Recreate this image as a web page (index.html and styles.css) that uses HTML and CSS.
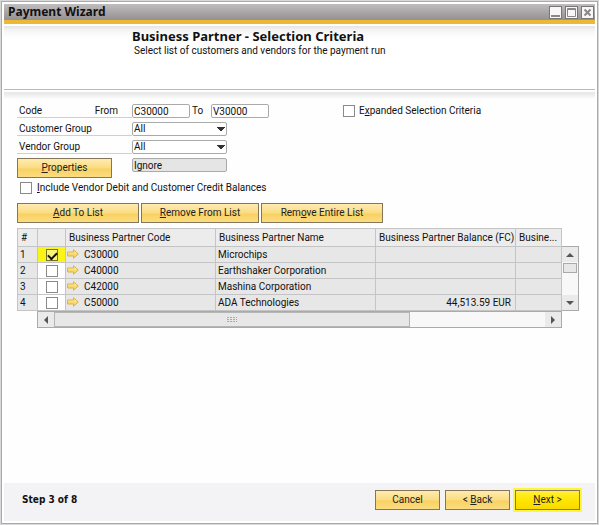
FILE: index.html
```html
<!DOCTYPE html>
<html lang="en">
<head>
<meta charset="utf-8">
<title>Payment Wizard</title>
<link rel="stylesheet" href="styles.css">
</head>
<body>
<svg class="defs" aria-hidden="true">
  <defs>
    <linearGradient id="gold" x1="0" y1="0" x2="0" y2="1">
      <stop offset="0" stop-color="#fff3a0"/><stop offset="1" stop-color="#f3c545"/>
    </linearGradient>
    <symbol id="arrow" viewBox="0 0 12 10"><path d="M.5 3h6V.7L11.3 5 6.5 9.3V7h-6z" fill="url(#gold)" stroke="#dcb350"/></symbol>
  </defs>
</svg>
<main class="window">
  <header class="titlebar">
    <h1>Payment Wizard</h1>
    <div class="window-buttons">
      <button aria-label="Minimize"><svg viewBox="0 0 11 11"><path d="M1 9h9" stroke-width="2"/></svg></button>
      <button aria-label="Maximize"><svg viewBox="0 0 11 11"><path d="M1.5 1.5h8v8h-8zM1 2.5h9"/></svg></button>
      <button aria-label="Close"><svg viewBox="0 0 11 11"><path d="M2.5 2.5l6 6M8.5 2.5l-6 6" stroke-width="2"/></svg></button>
    </div>
  </header>
  <section class="intro">
    <h2>Business Partner - Selection Criteria</h2>
    <p>Select list of customers and vendors for the payment run</p>
  </section>
  <form class="content">
    <div class="criteria">
      <div class="fields">
        <div class="field">
          <div class="caption split"><span>Code</span><label for="from">From</label></div>
          <input class="box code" id="from" value="C30000">
          <label class="to" for="to">To</label>
          <input class="box code" id="to" value="V30000">
        </div>
        <div class="field">
          <label class="caption" for="cgroup">Customer Group</label>
          <select class="box wide" id="cgroup"><option>All</option></select>
        </div>
        <div class="field">
          <label class="caption" for="vgroup">Vendor Group</label>
          <select class="box wide" id="vgroup"><option>All</option></select>
        </div>
        <div class="field last">
          <div class="caption plain"><button type="button" class="btn properties"><u>P</u>roperties</button></div>
          <input class="box wide muted" aria-label="Properties" value="Ignore" readonly>
        </div>
      </div>
      <label class="check"><input type="checkbox"><span>E<u>x</u>panded Selection Criteria</span></label>
    </div>
    <label class="check include"><input type="checkbox"><span><u>I</u>nclude Vendor Debit and Customer Credit Balances</span></label>
    <div class="actions">
      <button type="button" class="btn"><u>A</u>dd To List</button>
      <button type="button" class="btn"><u>R</u>emove From List</button>
      <button type="button" class="btn">Rem<u>o</u>ve Entire List</button>
    </div>
    <div class="list">
      <table>
        <colgroup><col class="c-num"><col class="c-check"><col class="c-code"><col class="c-name"><col class="c-balance"><col></colgroup>
        <thead>
          <tr><th>#</th><th></th><th>Business Partner Code</th><th>Business Partner Name</th><th>Business Partner Balance (FC)</th><th>Busine...</th></tr>
        </thead>
        <tbody>
          <tr><td>1</td><td class="pick marked"><input type="checkbox" aria-label="C30000" checked></td><td class="partner"><svg><use href="#arrow"/></svg>C30000</td><td>Microchips</td><td></td><td></td></tr>
          <tr><td>2</td><td class="pick"><input type="checkbox" aria-label="C40000"></td><td class="partner"><svg><use href="#arrow"/></svg>C40000</td><td>Earthshaker Corporation</td><td></td><td></td></tr>
          <tr><td>3</td><td class="pick"><input type="checkbox" aria-label="C42000"></td><td class="partner"><svg><use href="#arrow"/></svg>C42000</td><td>Mashina Corporation</td><td></td><td></td></tr>
          <tr><td>4</td><td class="pick"><input type="checkbox" aria-label="C50000"></td><td class="partner"><svg><use href="#arrow"/></svg>C50000</td><td>ADA Technologies</td><td class="amount">44,513.59 EUR</td><td></td></tr>
        </tbody>
      </table>
      <div class="vscroll">
        <button type="button" aria-label="Scroll up"><svg viewBox="0 0 14 14"><path d="M3 9h8L7 5z"/></svg></button>
        <span class="thumb"></span>
        <button type="button" aria-label="Scroll down"><svg viewBox="0 0 14 14"><path d="M3 5h8L7 9z"/></svg></button>
      </div>
      <div class="hscroll">
        <button type="button" aria-label="Scroll left"><svg viewBox="0 0 14 14"><path d="M9 3v8L5 7z"/></svg></button>
        <span class="thumb"><svg class="grip" viewBox="0 0 10 6"><path d="M0 .5h10M0 2.5h10M0 4.5h10"/></svg></span>
        <button type="button" aria-label="Scroll right"><svg viewBox="0 0 14 14"><path d="M5 3v8l4-4z"/></svg></button>
      </div>
    </div>
  </form>
  <footer class="footer">
    <strong>Step 3 of 8</strong>
    <div class="nav">
      <button class="btn">Cancel</button>
      <button class="btn">&lt; <u>B</u>ack</button>
      <button class="btn next"><u>N</u>ext &gt;</button>
    </div>
  </footer>
</main>
</body>
</html>
```
FILE: styles.css
```css
* { box-sizing: border-box; }
body {
  margin: 0;
  padding: 1px;
  background: #d8d8d8;
  color: #111;
  font: 10px/14px Roboto, "Noto Sans", sans-serif;
}
button, input, select { font: inherit; color: inherit; margin: 0; }
h1, h2, p { margin: 0; }
u { text-underline-offset: 1px; }
.defs { position: absolute; width: 0; height: 0; }

.window {
  display: flex;
  flex-direction: column;
  min-height: calc(100vh - 2px);
  padding: 2px;
  border: 1px solid #aaa;
  background: #fff;
}
.titlebar {
  display: flex;
  align-items: center;
  justify-content: space-between;
  height: 20px;
  padding: 0 1px 0 4px;
  border-bottom: 4px solid #edb935;
  background: linear-gradient(#bfbdbe, #959091);
}
.titlebar h1 { font: bold 12px/16px "Noto Sans", sans-serif; }
.window-buttons { display: flex; gap: 3px; }
.window-buttons button {
  display: flex;
  width: 13px;
  height: 13px;
  padding: 0;
  border: 1px solid #777;
  background: #f7f7f7;
}
.window-buttons svg { width: 11px; height: 11px; fill: none; stroke: #888; }

.intro {
  height: 64px;
  margin-top: 2px;
  padding: 3px 0 0 128px;
  border-bottom: 1px solid #bbb;
  background: linear-gradient(#e4e4e4, #f4f4f4 4px, #fff 12px);
}
.intro h2 { font: bold 13px/15px "Noto Sans", sans-serif; }
.intro p { padding-left: 2px; }

.content {
  flex: 1;
  margin-top: 2px;
  padding: 12px 16px 0 13px;
  background: linear-gradient(#e6e6e6, #eee 3px, #fefefe 7px);
}
.criteria { display: flex; }
.fields { flex: 0 0 326px; }
.field { display: flex; height: 18px; }
.caption { width: 115px; height: 14px; padding: 0 2px; border-bottom: 1px solid #ccd0d4; }
.split { display: flex; justify-content: space-between; padding-right: 14px; }
.plain { padding: 0; border: 0; }
.box {
  height: 14px;
  padding: 0 1px;
  border: 1px solid #aaa;
  border-radius: 2px;
  background: #fff;
  line-height: 12px;
}
.code { width: 58px; }
.to { width: 21px; padding-left: 2px; }
.wide { width: 95px; }
select.box {
  appearance: none;
  background-image:
    linear-gradient(to bottom right, #333 50%, transparent 51%),
    linear-gradient(to bottom left, #333 50%, transparent 51%);
  background-size: 4px 5px;
  background-position: right 1px top 4px, right 5px top 4px;
  background-repeat: no-repeat;
}
.muted { background: #e5e5e5; }
.last { height: 21px; }
.btn {
  height: 20px;
  padding: 0;
  border: 1px solid #85765a;
  background: linear-gradient(#ffebb0, #fadc82 50%, #f8d160 55%, #fbdc82);
  color: #222;
  line-height: 16px;
}
.properties { width: 95px; }

.check { display: flex; align-items: center; gap: 4px; height: 14px; }
input[type="checkbox"] {
  flex: none;
  appearance: none;
  width: 12px;
  height: 12px;
  border: 1px solid #8a8a8a;
  background: #fff;
}
.include { margin-top: 2px; padding-left: 3px; gap: 5px; }
.actions { display: flex; gap: 2px; margin-top: 8px; }
.actions .btn { width: 122px; }
.actions .btn:nth-child(2) { width: 118px; }

.list {
  display: grid;
  grid-template-columns: 1fr 17px;
  margin-top: 5px;
}
table {
  width: 100%;
  table-layout: fixed;
  border-collapse: collapse;
  background: #e7e7e7;
}
.c-num { width: 20px; }
.c-check { width: 28px; }
.c-code { width: 150px; }
.c-name { width: 160px; }
.c-balance { width: 140px; }
th, td {
  height: 16px;
  padding: 0 2px;
  overflow: hidden;
  border: 1px solid #c4c4c4;
  font-weight: 400;
  line-height: 14px;
  text-align: left;
  white-space: nowrap;
}
th { height: 18px; padding-left: 3px; background: #ececec; }
.pick { padding: 0; background: #fff; }
.pick input { display: block; margin: 0 auto; }
.marked { background: #fbf418; }
.marked input { border-color: #77742a; background: #f8f476; }
.marked input::before {
  content: "";
  display: block;
  width: 7px;
  height: 4px;
  margin: 2px 0 0 1px;
  border: solid #111;
  border-width: 0 0 2px 2px;
  transform: rotate(-45deg);
}
.partner svg { width: 12px; height: 10px; margin-right: 5px; vertical-align: -1px; }
.partner { padding-left: 1px; }
.amount { padding-right: 4px; text-align: right; }

.vscroll, .hscroll { display: flex; border: 1px solid #aaa; background: #f8f8f8; }
.vscroll { flex-direction: column; margin-top: 18px; border-left: 0; }
.vscroll button, .hscroll button {
  display: flex;
  align-items: center;
  justify-content: center;
  flex: none;
  width: 16px;
  height: 15px;
  padding: 0;
  border: 0;
  background: #eaeaea;
}
.vscroll svg, .hscroll button svg { width: 14px; height: 14px; fill: #555; }
.vscroll .thumb { height: 10px; margin: 1px; border: 1px solid #aaa; background: #e7e7e7; }
.vscroll button:last-child, .hscroll button:last-child { margin-top: auto; margin-left: auto; }
.hscroll { height: 17px; margin-left: 20px; }
.hscroll .thumb {
  display: flex;
  align-items: center;
  justify-content: center;
  width: 68%;
  border: 1px solid #b5b5b5;
  background: #e7e7e7;
}
.grip { width: 10px; height: 6px; stroke: #aaa; stroke-dasharray: 2 1; }

.footer {
  display: flex;
  align-items: center;
  justify-content: space-between;
  height: 38px;
  padding: 0 15px 4px 18px;
  background: #f3f2f4;
}
.footer strong { font: bold 10px/14px "DejaVu Sans Condensed", sans-serif; }
.nav { display: flex; gap: 5px; }
.nav .btn { width: 65px; }
.nav .next { background: linear-gradient(#fff13a, #ffe500 50%, #f7db00); box-shadow: 0 0 0 2px #fff53a; }
```
